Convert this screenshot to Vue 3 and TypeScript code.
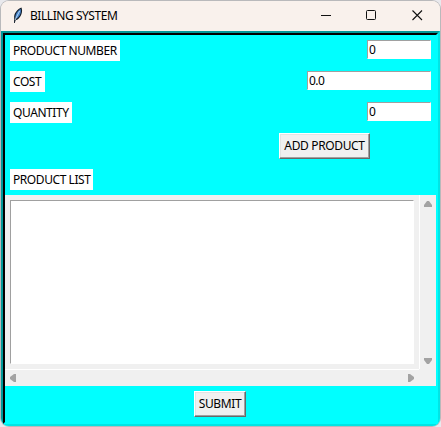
<script setup lang="ts">
import { ref } from 'vue'

interface Field {
  id: string
  label: string
  value: string
}

const fields = ref<Field[]>([
  { id: 'number', label: 'PRODUCT NUMBER', value: '0' },
  { id: 'cost', label: 'COST', value: '0.0' },
  { id: 'quantity', label: 'QUANTITY', value: '0' },
])
</script>

<template>
  <div class="desktop">
    <div class="window">
      <header class="titlebar">
        <svg class="feather" width="12" height="17" viewBox="0 0 12 17">
          <path d="M2 16 L2.2 11 C1.6 7 5 2.5 9.4 0.6 C11 4 9.8 9.5 5.6 12.6 L3.6 13.2 L2.8 16 Z" fill="#16202c" />
          <path d="M3.4 11 C3 7 6 3.4 8.6 2 C9.6 5 8 9 4.8 11.6 Z" fill="#4584cc" />
          <path d="M3 13 L7.6 4" stroke="#b9d6f2" stroke-width="1" />
        </svg>
        <h1 class="title">BILLING SYSTEM</h1>
        <svg class="controls" width="106" height="12" viewBox="0 0 106 12" fill="none" stroke="#111" stroke-width="1">
          <path d="M1 6.5 H11" />
          <rect x="46.5" y="1.5" width="9" height="9" rx="1" />
          <path d="M92.5 1.5 L102 11 M102 1.5 L92.5 11" stroke-width="1.1" />
        </svg>
      </header>
      <main class="body">
        <div v-for="f in fields" :key="f.id" class="row">
          <span class="label" :class="'label-' + f.id">{{ f.label }}</span>
          <span class="entry" :class="'entry-' + f.id">{{ f.value }}</span>
        </div>
        <div class="action"><button class="button add">ADD PRODUCT</button></div>
        <div class="list-label"><span class="label label-list">PRODUCT LIST</span></div>
        <section class="list-frame">
          <div class="list-cell"><div class="listbox"></div></div>
          <div class="vscroll">
            <svg width="8" height="6" viewBox="0 0 8 6"><path d="M3 0 H5 L8 4 V6 H0 V4 Z" fill="#a3a3a3" /></svg>
            <svg width="8" height="6" viewBox="0 0 8 6"><path d="M3 6 H5 L8 2 V0 H0 V2 Z" fill="#a3a3a3" /></svg>
          </div>
          <div class="hscroll">
            <svg width="6" height="8" viewBox="0 0 6 8"><path d="M0 3 V5 L4 8 H6 V0 H4 Z" fill="#a3a3a3" /></svg>
            <svg width="6" height="8" viewBox="0 0 6 8"><path d="M6 3 V5 L2 8 H0 V0 H2 Z" fill="#a3a3a3" /></svg>
          </div>
          <div class="corner"></div>
        </section>
        <div class="submit-row"><button class="button submit">SUBMIT</button></div>
      </main>
    </div>
  </div>
</template>

<style>
body {
  overflow: hidden;
}
</style>

<style scoped>
.desktop {
  box-sizing: border-box;
  width: 441px;
  height: 427px;
  padding: 1px;
  background: #e9e9ed;
  font-family: "Noto Sans", "Open Sans", sans-serif;
  font-size: 12px;
  color: #000;
}
.window {
  width: 439px;
  height: 425px;
  border-radius: 8px;
  overflow: hidden;
  background: #f9f1ec;
  box-shadow: 0 0 0 1px #b9b9bb;
}
.titlebar {
  display: flex;
  align-items: center;
  height: 30px;
  background: #f9f1ec;
}
.feather {
  margin: -2px 0 0 11px;
}
.title {
  margin: 0 0 0 6px;
  font-size: 12px;
  font-weight: 400;
  line-height: 16px;
  letter-spacing: -0.45px;
  white-space: nowrap;
}
.controls {
  margin: -2px 14px 0 auto;
}
.body {
  box-sizing: border-box;
  height: 395px;
  border: 2px solid;
  border-color: #009999 #00e5e5 #00e5e5 #009999;
  background: #00ffff;
  position: relative;
  padding: 2px;
  display: flex;
  flex-direction: column;
}
.body::before {
  content: "";
  position: absolute;
  inset: 0;
  border: 2px solid;
  border-color: #000 #00ffff #00ffff #000;
}
.row {
  display: flex;
  justify-content: space-between;
  align-items: flex-start;
  height: 31px;
  padding: 5px 5px 0;
  box-sizing: border-box;
}
.label {
  box-sizing: border-box;
  display: block;
  height: 21px;
  padding-left: 3px;
  background: #fff;
  line-height: 21px;
  white-space: nowrap;
  letter-spacing: -0.43px;
}
.label-number { width: 110px; }
.label-cost { width: 35px; }
.label-quantity { width: 62px; }
.label-list { width: 83px; }
.entry {
  box-sizing: border-box;
  height: 19px;
  width: 64px;
  padding-left: 1px;
  border: 1px solid #fff;
  border-top-color: #a0a0a0;
  border-left-color: #a0a0a0;
  background: #fff;
  line-height: 18px;
  letter-spacing: -0.5px;
}
.entry-cost { width: 124px; }
.action {
  height: 36px;
  padding: 5px 0 0 274px;
  box-sizing: border-box;
}
.button {
  box-sizing: border-box;
  display: flex;
  align-items: center;
  justify-content: center;
  height: 26px;
  margin: 0;
  padding: 0;
  border: 1px solid;
  border-color: #fff #696969 #696969 #fff;
  border-radius: 0;
  box-shadow: inset -1px -1px 0 #a0a0a0, inset 1px 1px 0 #e3e3e3;
  background: #f0f0f0;
  color: #000;
  font: inherit;
  line-height: 16px;
  letter-spacing: -0.35px;
  white-space: nowrap;
}
.add { width: 91px; }
.submit { width: 52px; }
.list-label {
  height: 31px;
  padding: 5px 5px 0;
  box-sizing: border-box;
}
.list-frame {
  display: grid;
  grid-template-columns: 414px 17px;
  grid-template-rows: 174px 17px;
  width: 431px;
  height: 191px;
  background: #f0f0f0;
}
.list-cell {
  padding: 5px;
}
.listbox {
  box-sizing: border-box;
  height: 164px;
  border: 1px solid #fff;
  border-top-color: #a0a0a0;
  border-left-color: #a0a0a0;
  background: #fff;
}
.vscroll {
  display: flex;
  flex-direction: column;
  align-items: center;
  justify-content: space-between;
  padding: 6px 0 5px;
  border-left: 1px solid #fff;
}
.hscroll {
  display: flex;
  align-items: center;
  justify-content: space-between;
  padding: 0 5px;
  border-top: 1px solid #fff;
}
.submit-row {
  padding: 5px 0 0 189px;
}
</style>
